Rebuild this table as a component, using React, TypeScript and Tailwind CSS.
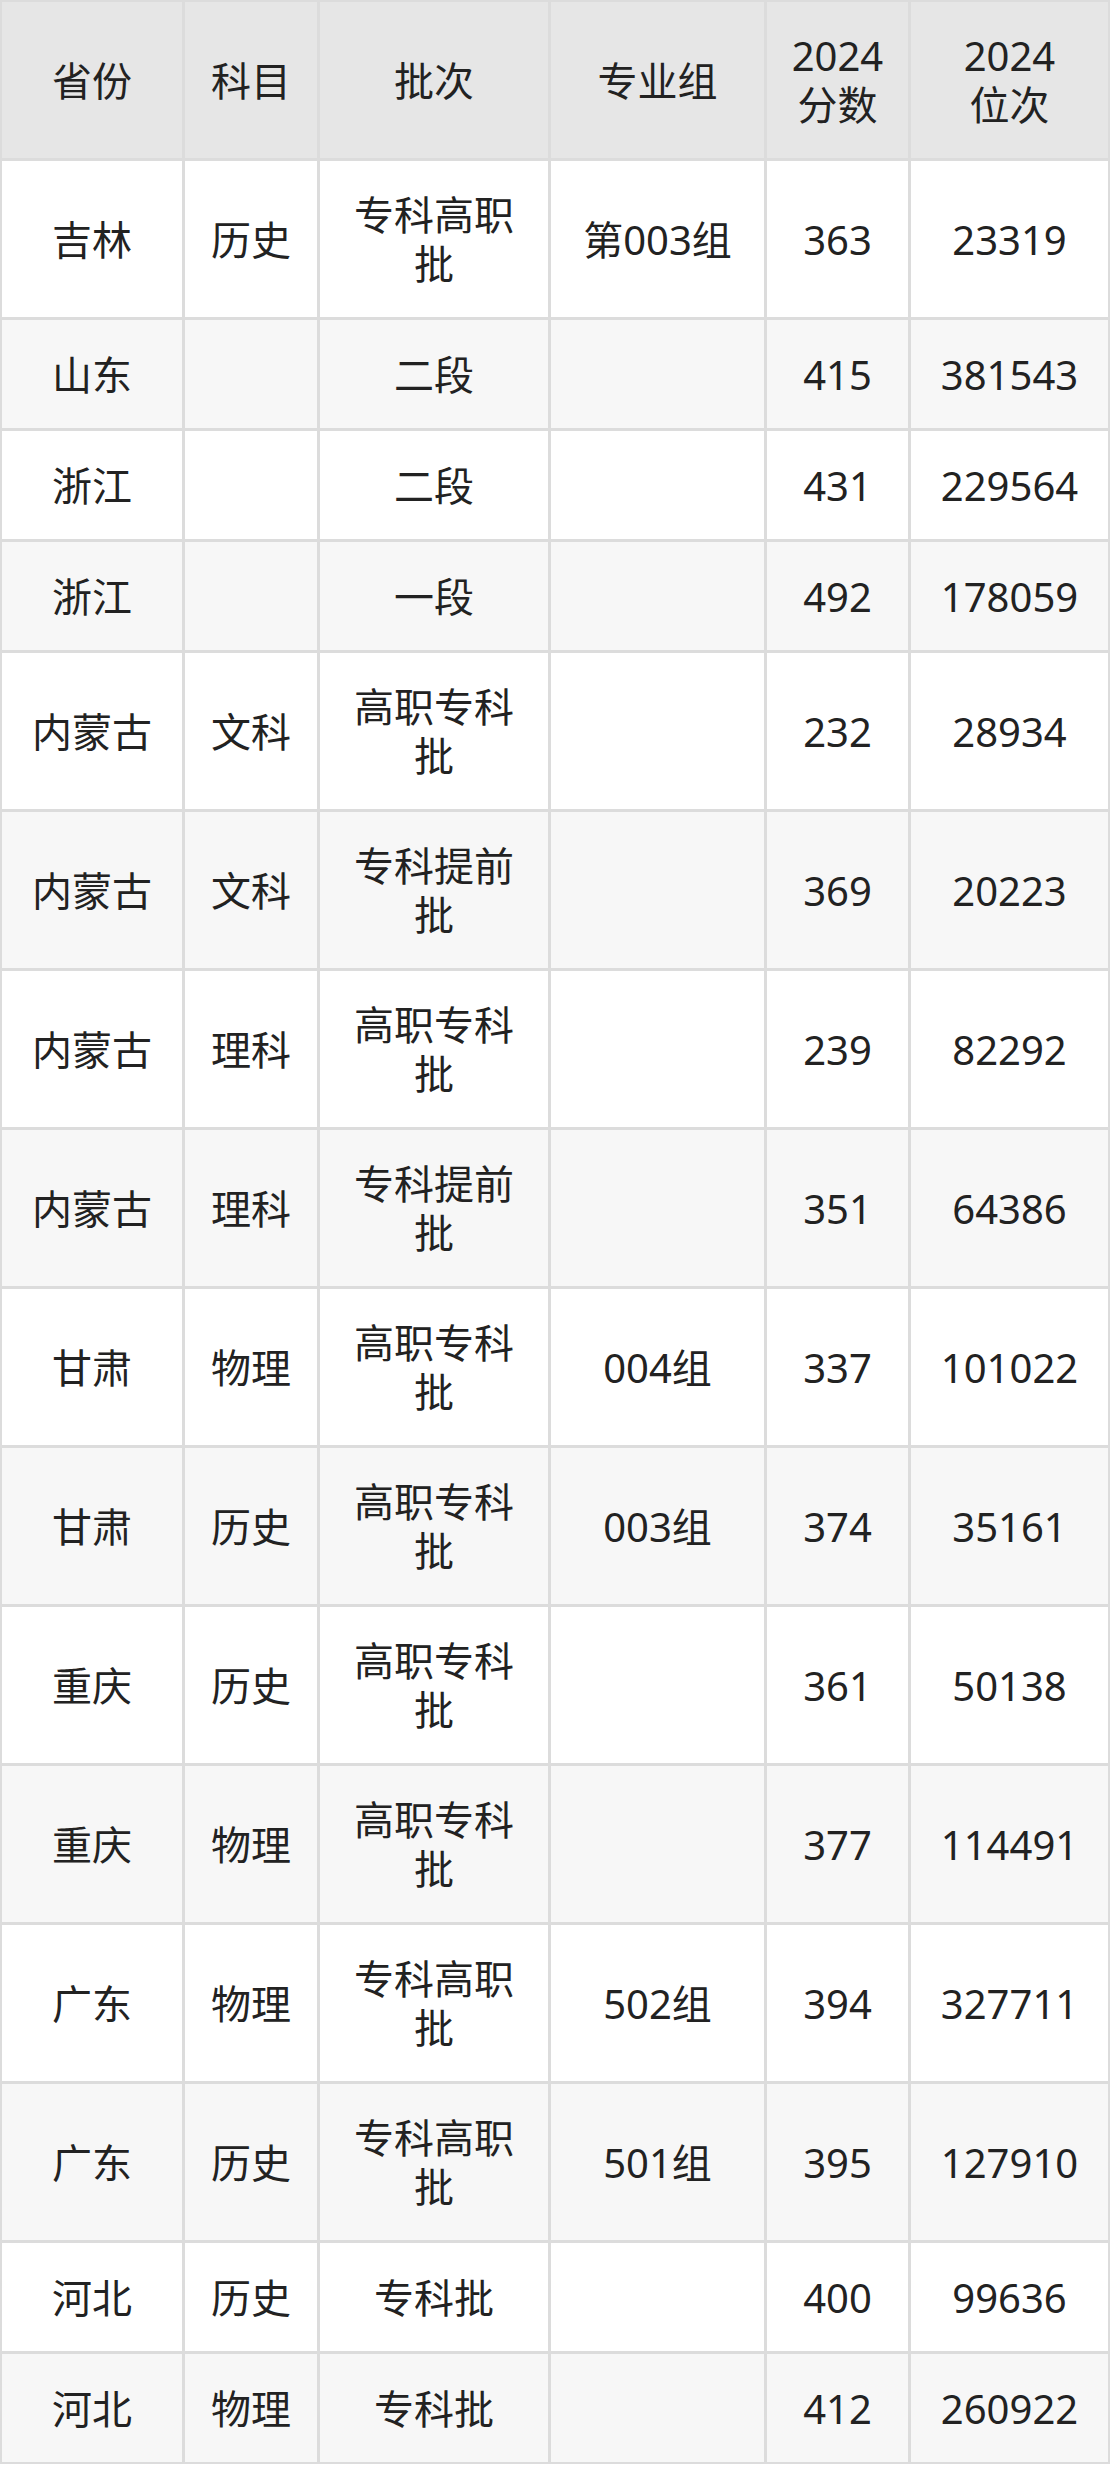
import clsx from "clsx";

const HEADERS = ["省份", "科目", "批次", "专业组", "2024\n分数", "2024\n位次"];

type Row = {
  cells: string[];
  tall: boolean;
};

const ROWS: Row[] = [
  { cells: ["吉林", "历史", "专科高职\n批", "第003组", "363", "23319"], tall: true },
  { cells: ["山东", "", "二段", "", "415", "381543"], tall: false },
  { cells: ["浙江", "", "二段", "", "431", "229564"], tall: false },
  { cells: ["浙江", "", "一段", "", "492", "178059"], tall: false },
  { cells: ["内蒙古", "文科", "高职专科\n批", "", "232", "28934"], tall: true },
  { cells: ["内蒙古", "文科", "专科提前\n批", "", "369", "20223"], tall: true },
  { cells: ["内蒙古", "理科", "高职专科\n批", "", "239", "82292"], tall: true },
  { cells: ["内蒙古", "理科", "专科提前\n批", "", "351", "64386"], tall: true },
  { cells: ["甘肃", "物理", "高职专科\n批", "004组", "337", "101022"], tall: true },
  { cells: ["甘肃", "历史", "高职专科\n批", "003组", "374", "35161"], tall: true },
  { cells: ["重庆", "历史", "高职专科\n批", "", "361", "50138"], tall: true },
  { cells: ["重庆", "物理", "高职专科\n批", "", "377", "114491"], tall: true },
  { cells: ["广东", "物理", "专科高职\n批", "502组", "394", "327711"], tall: true },
  { cells: ["广东", "历史", "专科高职\n批", "501组", "395", "127910"], tall: true },
  { cells: ["河北", "历史", "专科批", "", "400", "99636"], tall: false },
  { cells: ["河北", "物理", "专科批", "", "412", "260922"], tall: false },
];

function Cell({ text, className }: { text: string; className: string }) {
  return (
    <div
      className={clsx(
        "flex items-center justify-center whitespace-pre-line text-center text-[40px] leading-[49px] text-[#222222]",
        className,
      )}
    >
      {text}
    </div>
  );
}

export default function App() {
  return (
    <div
      className="w-[1110px] bg-white"
      style={{ fontFamily: '"Noto Sans", "Noto Sans CJK SC", sans-serif' }}
    >
      <div className="grid grid-cols-[180px_132px_228px_213px_141px_197px] gap-[3px] border-2 border-[#dcdcdc] bg-[#dcdcdc]">
        {HEADERS.map((h) => (
          <Cell key={h} text={h} className="h-[156px] bg-[#e6e6e6]" />
        ))}
        {ROWS.map((row, i) =>
          row.cells.map((c, j) => (
            <Cell
              key={`${i}-${j}`}
              text={c}
              className={clsx(
                row.tall ? "h-[156px]" : "h-[108px]",
                i % 2 === 0 ? "bg-white" : "bg-[#f7f7f7]",
              )}
            />
          )),
        )}
      </div>
    </div>
  );
}
